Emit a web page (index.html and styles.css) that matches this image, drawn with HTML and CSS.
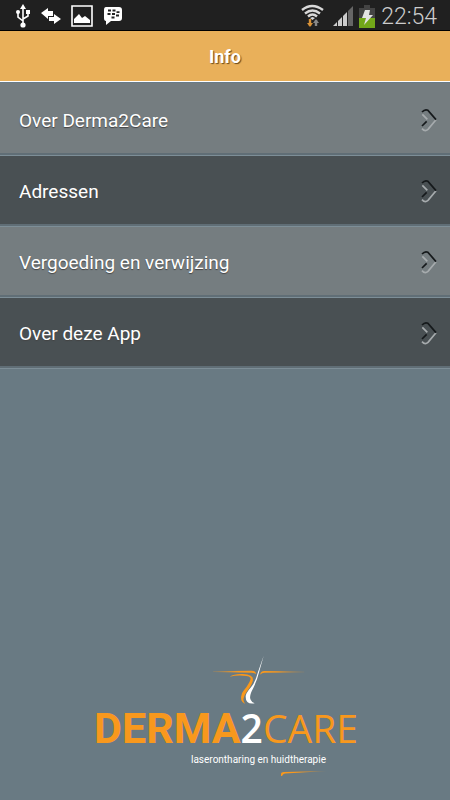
FILE: index.html
```html
<!DOCTYPE html>
<html lang="nl">
<head>
<meta charset="utf-8">
<meta name="viewport" content="width=device-width, initial-scale=1">
<title>Info</title>
<link rel="stylesheet" href="styles.css">
</head>
<body>
<svg class="defs" aria-hidden="true">
  <symbol id="chevron" viewBox="60 96 54 72">
    <path d="M67 115 82 130M108 131 84 160Q75 168 66 158" fill="none" stroke="#a6abad" stroke-width="5"/>
    <path d="M66 108Q75 98 84 103L108 131M66 150 80 136" fill="none" stroke="#15191b" stroke-width="5"/>
  </symbol>
</svg>
<div class="status">
  <div class="group">
    <svg width="16" height="24" viewBox="0 0 16 24" fill="none" stroke="#fff" stroke-width="1.6"><path d="M8 3v18M3 9v4l5 4M13 8v4l-5 3"/><path d="M8 0 5 5h6z" fill="#fff" stroke="none"/><circle cx="8" cy="21" r="2.600" fill="#fff" stroke="none"/><circle cx="3" cy="8" r="2" fill="#fff" stroke="none"/><path d="M11 6h4v4h-4z" fill="#fff" stroke="none"/></svg>
    <svg width="20" height="18" viewBox="0 0 20 18" fill="#fff"><path d="M0 6 7 1v3h5v5H7v3zM20 12l-7 5v-3H8v-4h5V7z"/></svg>
    <svg width="22" height="22" viewBox="0 0 22 22"><path d="M1 1h20v20H1z" fill="none" stroke="#fff" stroke-width="1.600"/><path d="M3 18v-4l5-5 3 4 3-2 5 4v3z" fill="#fff"/></svg>
    <svg width="20" height="20" viewBox="0 0 20 20"><path d="M3 1h13q3 0 3 3v8q0 3-3 3H8l-5 4v-4q-2 0-2-3V4q0-3 2-3z" fill="#fff"/><path d="M5 4.500h3M9.500 4.500h3M4.500 8h3M9 8h3M13.500 6.200h3M13 9.500h3M8.500 11.500h3" stroke="#222" stroke-width="1.800"/></svg>
  </div>
  <div class="group right">
    <svg class="wifi" width="24" height="24" viewBox="0 0 24 24" fill="none" stroke="#d8d8d8" stroke-width="2.400"><path d="M1 6q10-8 21 0M4 9.500q7.500-6 15 0M7 12.500q4.500-4 9 0"/><path d="m9 14 2.500-1L14 14l-2.500 2z" fill="#d8d8d8" stroke="none"/><path d="M9 15v7" stroke="#d89238"/><path d="m6 19 3 4 3-4z" fill="#d89238" stroke="none"/><path d="M15 22v-6" stroke="#888"/><path d="m12 19 3-4 3 4z" fill="#888" stroke="none"/></svg>
    <svg width="20" height="20" viewBox="0 0 20 20"><path d="M0 20 4 16v4zM5 15l4-4v9H5zM10 10l4-4v14h-4z" fill="#ccc"/><path d="m15 5 5-5v20h-5z" fill="#666"/></svg>
    <svg width="16" height="23" viewBox="0 0 16 23"><path d="M5 0h6v3h5v20H0V3h5z" fill="#444"/><path d="M0 13h16v10H0z" fill="#72a719"/><path d="M6 5h5l-1 5h4L5 20l2-7H3z" fill="#e4e4e4"/></svg>
    <time>22:54</time>
  </div>
</div>
<header class="bar"><h1>Info</h1></header>
<nav class="list">
  <a href="#over">Over Derma2Care<svg class="chevron"><use href="#chevron"/></svg></a>
  <a href="#adressen">Adressen<svg class="chevron"><use href="#chevron"/></svg></a>
  <a href="#vergoeding">Vergoeding en verwijzing<svg class="chevron"><use href="#chevron"/></svg></a>
  <a href="#app">Over deze App<svg class="chevron"><use href="#chevron"/></svg></a>
</nav>
<footer class="brand">
  <svg class="figure" width="92" height="50" viewBox="39 15 276 150">
    <defs>
      <linearGradient id="fadeL"><stop offset="0" stop-color="#f8981d" stop-opacity=".2"/><stop offset=".6" stop-color="#f8981d"/></linearGradient>
      <linearGradient id="fadeR"><stop offset=".4" stop-color="#f8981d"/><stop offset="1" stop-color="#f8981d" stop-opacity=".2"/></linearGradient>
    </defs>
    <path d="M39 64 155 62q14 1 13 11-3-5-13-5L39 66z" fill="url(#fadeL)"/>
    <path d="M181 74q0-11 12-11l120 2v2l-120 1q-8 0-12 6z" fill="url(#fadeR)"/>
    <path d="M89 80Q102 71 128 72q33 1 31 18-2 14-19 35-16 22-5 37-18-9-9-32 3-7 14-20 10-14 12-23 1-10-24-10-21-1-39 3z" fill="#f8981d"/>
    <path d="M191 17 179 60q-7 29-19 54-14 25-8 35 4 9 12 11-27 4-27-20 0-10 16-28 12-13 21-46z" fill="#fff"/>
  </svg>
  <div class="name"><b>DERMA</b><span class="two">2</span><span class="care">CARE</span></div>
  <div class="tag">laserontharing en huidtherapie</div>
  <svg class="swash" width="46" height="5" viewBox="0 0 46 5"><path d="M0 5V3q0-2 3-2l43-1-42 2.500q-2 0-3 2.500z" fill="url(#fadeR)"/></svg>
</footer>
</body>
</html>
```
FILE: styles.css
```css
* { box-sizing: border-box; }
body {
  margin: 0;
  min-height: 100vh;
  display: flex;
  flex-direction: column;
  background: #697a83;
  color: #fff;
  font-family: Roboto, sans-serif;
}
.defs { position: absolute; width: 0; height: 0; }
.status {
  display: flex;
  justify-content: space-between;
  height: 31px;
  padding: 2px 13px 0 15px;
  background: #202020;
  border-bottom: 1px solid #000;
}
.group { display: flex; align-items: center; gap: 10px; }
.right { gap: 6px; }
.wifi { margin-right: 2px; }
.status time { color: #ccc; font-size: 23px; font-weight: 300; line-height: 28px; padding-top: 2px; }
.bar {
  height: 51px;
  display: flex;
  align-items: center;
  justify-content: center;
  background: #e9b05a;
  border-bottom: 1px solid #fff;
}
h1 { margin: 0; font-size: 18px; text-shadow: 1px 1px 1px #6b4a1a; }
.list {
  padding-top: 2px;
  background: #757d80;
  border-top: 1px solid #687b88;
}
.list a {
  height: 71px;
  display: flex;
  align-items: center;
  justify-content: space-between;
  padding: 0 12px 0 19px;
  background: #757d80;
  border-bottom: 1px solid #7d8e97;
  box-shadow: inset 0 -2px #606e76;
  color: #fff;
  font-size: 19px;
  text-decoration: none;
  text-shadow: 0 1px 1px #444;
}
.list a:nth-child(even) { background: #495053; }
.chevron { width: 18px; height: 24px; }
.brand {
  margin: auto auto 24px;
  width: 262px;
  display: flex;
  flex-direction: column;
}
.figure { margin-left: 119px; }
.name {
  display: flex;
  align-items: baseline;
  color: #f8981d;
  font-size: 43px;
  line-height: 45px;
}
.two { color: #fff; font-family: "Open Sans", sans-serif; font-size: 39px; font-weight: 600; }
.care { font-family: "Open Sans", sans-serif; font-size: 39px; font-weight: 400; }
.tag {
  margin-left: 97px;
  font-size: 10px;
  line-height: 18px;
  white-space: nowrap;
}
.swash { margin: 2px 0 0 187px; }
```
